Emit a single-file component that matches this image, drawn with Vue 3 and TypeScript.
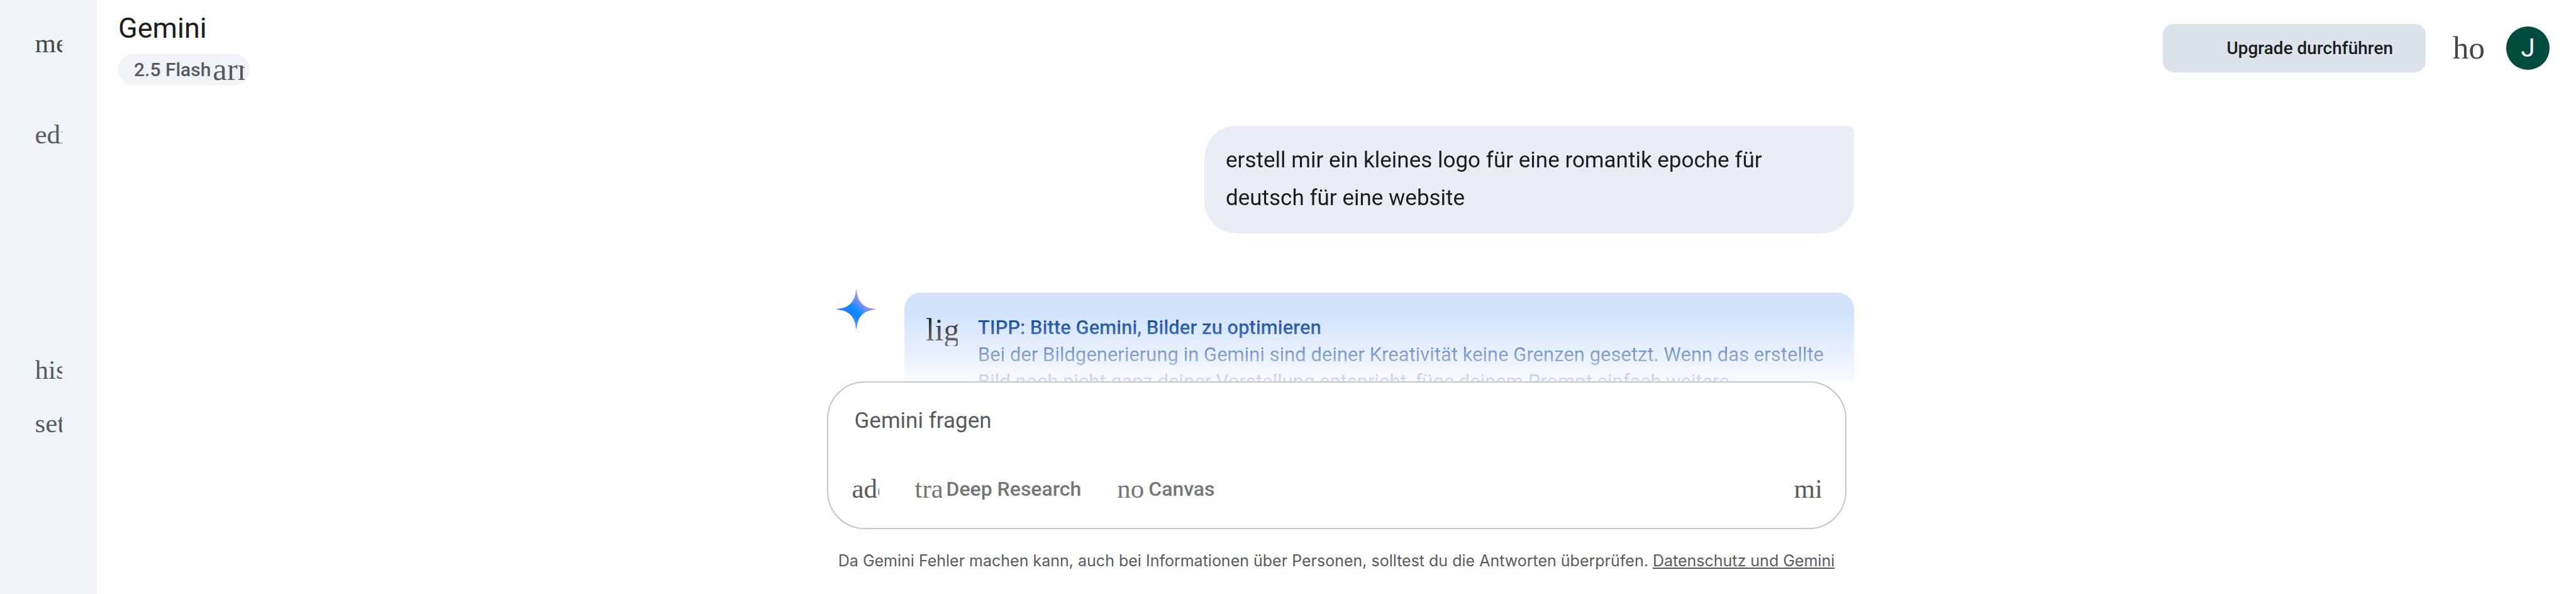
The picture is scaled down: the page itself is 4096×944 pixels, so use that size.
<script setup lang="ts">
import { ref } from 'vue'

interface IconAction {
  glyph: string
  label: string
  dark?: boolean
}

interface Tool {
  glyph: string
  name: string
}

const topActions: IconAction[] = [
  { glyph: 'men', label: 'Menü', dark: true },
  { glyph: 'edi', label: 'Neuer Chat' },
]
const bottomActions: IconAction[] = [
  { glyph: 'his', label: 'Aktivitäten' },
  { glyph: 'set', label: 'Einstellungen' },
]
const tools: Tool[] = [
  { glyph: 'tra', name: 'Deep Research' },
  { glyph: 'no', name: 'Canvas' },
]
const prompt = ref('')
</script>

<template>
  <div class="app">
    <nav class="sidebar" aria-label="Navigation">
      <div class="group">
        <button v-for="a in topActions" :key="a.glyph" class="side-button" :class="{ dark: a.dark }" :aria-label="a.label">
          <span class="icon">{{ a.glyph }}</span>
        </button>
      </div>
      <div class="group bottom">
        <button v-for="a in bottomActions" :key="a.glyph" class="side-button" :aria-label="a.label">
          <span class="icon">{{ a.glyph }}</span>
        </button>
      </div>
    </nav>

    <main class="main">
      <header class="topbar">
        <div class="brand">
          <h1 class="title">Gemini</h1>
          <button class="model">2.5 Flash<span class="icon large">arr</span></button>
        </div>
        <div class="account">
          <button class="upgrade">Upgrade durchführen</button>
          <span class="icon large dark">ho</span>
          <button class="avatar" aria-label="Google-Konto">J</button>
        </div>
      </header>

      <section class="chat">
        <div class="column">
          <p class="bubble">erstell mir ein kleines logo für eine romantik epoche für deutsch für eine website</p>
          <div class="response">
            <svg class="spark" viewBox="0 0 88 88" aria-hidden="true">
              <defs>
                <linearGradient id="spark-fill" gradientUnits="userSpaceOnUse" x1="20" y1="62" x2="62" y2="22">
                  <stop offset="0" stop-color="#2a7bfb" />
                  <stop offset="0.3" stop-color="#1a80ff" />
                  <stop offset="0.5" stop-color="#0c8fff" />
                  <stop offset="0.75" stop-color="#6a8eff" />
                  <stop offset="1" stop-color="#a890f9" />
                </linearGradient>
              </defs>
              <path d="M43.2 0H44.8C46 13 49 23 57 31C65 39 75 42 88 43.2V44.8C75 46 65 49 57 57C49 65 46 75 44.8 88H43.2C42 75 39 65 31 57C23 49 13 46 0 44.8V43.2C13 42 23 39 31 31C39 23 42 13 43.2 0Z" fill="url(#spark-fill)" />
            </svg>
            <article class="tip">
              <span class="icon large tip-icon">lig</span>
              <div class="tip-text">
                <h2 class="tip-title">TIPP: Bitte Gemini, Bilder zu optimieren</h2>
                <p class="tip-body">Bei der Bildgenerierung in Gemini sind deiner Kreativität keine Grenzen gesetzt. Wenn das erstellte Bild noch nicht ganz deiner Vorstellung entspricht, füge deinem Prompt einfach weitere</p>
              </div>
            </article>
          </div>
        </div>
      </section>

      <form class="composer" @submit.prevent>
        <input v-model="prompt" class="prompt" type="text" placeholder="Gemini fragen" aria-label="Gemini fragen" />
        <div class="tools">
          <button type="button" class="tool add" aria-label="Dateien hinzufügen"><span class="icon">add</span></button>
          <button v-for="t in tools" :key="t.name" type="button" class="tool">
            <span class="icon">{{ t.glyph }}</span>{{ t.name }}
          </button>
          <button type="button" class="tool mic" aria-label="Mikrofon"><span class="icon">mi</span></button>
        </div>
      </form>

      <footer class="notice">
        Da Gemini Fehler machen kann, auch bei Informationen über Personen, solltest du die Antworten überprüfen.
        <a href="#">Datenschutz und Gemini</a>
      </footer>
    </main>
  </div>
</template>

<style>
body {
  margin: 0;
  background: #fff;
}
</style>

<style scoped>
.app {
  display: flex;
  height: 100vh;
  overflow: hidden;
  font-family: Roboto, Inter, sans-serif;
  color: #1b1c1d;
}

button {
  margin: 0;
  padding: 0;
  border: 0;
  background: none;
  color: inherit;
  font: inherit;
  white-space: nowrap;
}

h1,
h2,
p {
  margin: 0;
}

.icon {
  flex: none;
  width: 43px;
  height: 43px;
  overflow: hidden;
  font: 400 43px/43px "Liberation Serif", serif;
  text-align: left;
  white-space: nowrap;
}

.icon.large {
  width: 51px;
  height: 51px;
  font-size: 51px;
  line-height: 51px;
}

.dark {
  color: #444746;
}

.sidebar {
  flex: none;
  box-sizing: border-box;
  width: 154px;
  padding: 26px 0 229px;
  display: flex;
  flex-direction: column;
  justify-content: space-between;
  background: #f0f4f9;
  color: #575b5f;
}

.group {
  display: flex;
  flex-direction: column;
  align-items: center;
  gap: 60px;
}

.group.bottom {
  gap: 0;
}

.side-button {
  display: flex;
  align-items: center;
  justify-content: center;
  width: 85px;
  height: 85px;
}

.main {
  flex: 1;
  min-width: 0;
  display: flex;
  flex-direction: column;
  align-items: center;
}

.topbar {
  align-self: stretch;
  display: flex;
  justify-content: space-between;
  padding: 21px 42px 0 34px;
}

.brand {
  display: flex;
  flex-direction: column;
  align-items: flex-start;
  gap: 16px;
}

.title {
  font-size: 45px;
  font-weight: 400;
  line-height: 48px;
}

.model {
  display: flex;
  align-items: center;
  gap: 3px;
  height: 51px;
  padding: 0 8px 0 25px;
  border-radius: 26px;
  background: #f0f4f9;
  color: #575b5f;
  font-size: 30px;
  font-weight: 500;
}

.account {
  display: flex;
  align-items: center;
  height: 111px;
}

.upgrade {
  height: 77px;
  margin-right: 43px;
  padding: 0 52px 0 101px;
  border-radius: 17px;
  background: #dde3ea;
  font-size: 28px;
  font-weight: 500;
}

.avatar {
  width: 69px;
  height: 69px;
  margin-left: 34px;
  border-radius: 50%;
  background: #004d40;
  color: #fff;
  font-size: 40px;
  line-height: 69px;
}

.chat {
  flex: 1;
  min-height: 0;
  align-self: stretch;
  overflow: hidden;
  display: flex;
  justify-content: center;
  -webkit-mask-image: linear-gradient(to top, rgba(0, 0, 0, 0.17) 0, #000 106px);
  mask-image: linear-gradient(to top, rgba(0, 0, 0, 0.17) 0, #000 106px);
}

.column {
  display: flex;
  flex-direction: column;
  gap: 90px;
  width: 1646px;
  max-width: 100%;
  padding-top: 64px;
}

.bubble {
  align-self: flex-end;
  box-sizing: border-box;
  max-width: 1033px;
  padding: 25px 34px 26px;
  border-radius: 51px 9px 51px 51px;
  background: #e9eef6;
  font-size: 35px;
  line-height: 60px;
}

.response {
  display: flex;
  align-items: flex-start;
  gap: 46px;
  padding-left: 29px;
}

.spark {
  flex: none;
  width: 61px;
  height: 61px;
}

.tip {
  flex: 1;
  display: flex;
  align-items: flex-start;
  gap: 32px;
  margin-top: 4px;
  padding: 34px;
  border-radius: 26px;
  background: #d3e3fd;
  color: #0842a0;
}

.tip-icon {
  color: #1f1f1f;
}

.tip-title,
.tip-body {
  font-size: 31px;
  line-height: 43px;
}

.tip-title {
  font-weight: 500;
}

.tip-body {
  font-weight: 400;
}

.composer {
  flex: none;
  box-sizing: border-box;
  width: 1621px;
  max-width: 100%;
  padding: 31px 38px 41px;
  display: flex;
  flex-direction: column;
  gap: 56px;
  border: 2px solid #c4c7c5;
  border-radius: 60px;
  background: #fff;
}

.prompt {
  box-sizing: border-box;
  width: 100%;
  height: 60px;
  margin: 0;
  padding: 0 4px;
  border: 0;
  outline: 0;
  background: none;
  color: #1b1c1d;
  font: 400 35px/60px Roboto, Inter, sans-serif;
}

.prompt::placeholder {
  color: #575b5f;
  opacity: 1;
}

.tools {
  display: flex;
  align-items: center;
  gap: 57px;
}

.tool {
  display: flex;
  align-items: center;
  gap: 7px;
  height: 43px;
  color: #747775;
  font-size: 32px;
  font-weight: 500;
}

.tool.add,
.tool.mic {
  color: #575b5f;
}

.tool.mic {
  margin-left: auto;
}

.notice {
  padding: 34px 0 37px;
  color: #575b5f;
  font-family: Inter, Roboto, sans-serif;
  font-size: 25px;
  line-height: 32px;
  text-align: center;
}

.notice a {
  color: inherit;
  text-decoration: underline 2px;
  text-decoration-skip-ink: none;
  text-underline-offset: 2px;
}
</style>
